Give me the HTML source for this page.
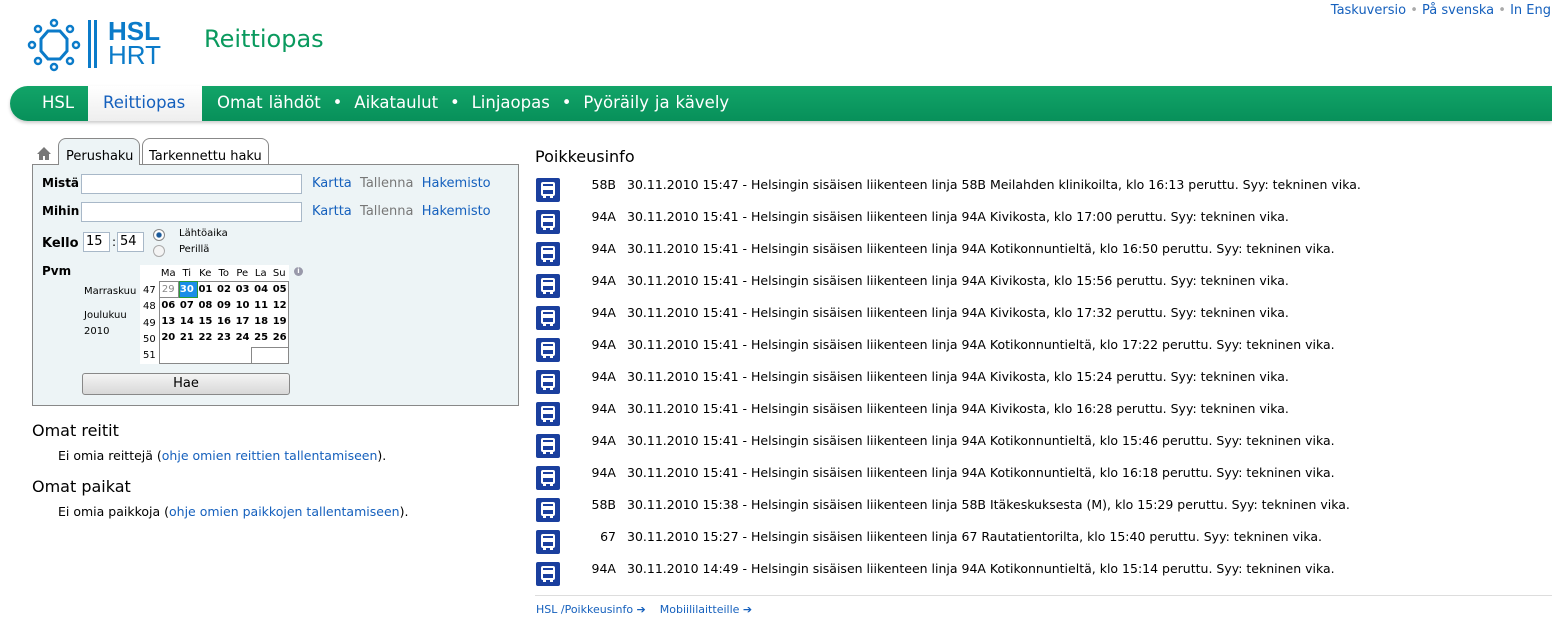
<!DOCTYPE html>
<html><head><meta charset="utf-8"><style>
*{margin:0;padding:0;box-sizing:border-box}
body{width:1552px;height:619px;background:#fff;font-family:"DejaVu Sans","Liberation Sans",sans-serif;position:relative;overflow:hidden;color:#000}
.a{position:absolute;white-space:nowrap}
a,.l{color:#1560bd;text-decoration:none}
.nav{position:absolute;left:10px;top:86px;width:1542px;height:35px;background:linear-gradient(#12a468,#07905a);border-radius:18px 0 0 18px;box-shadow:0 2px 3px #ccc}
.nav span{position:absolute;top:7px;color:#fff;font-size:16.5px;font-family:"DejaVu Sans",sans-serif}
.box{position:absolute;left:32px;top:164px;width:487px;height:242px;background:#edf4f6;border:1px solid #888}
.inp{position:absolute;background:#fff;border:1px solid #a8b8c8}
.f{font-size:12px}
.ic{position:absolute;width:24px;height:24px;background:#1a3f9e;border-radius:2px}
.ic i{position:absolute;left:5px;top:4px;width:14px;height:14px;border:2px solid #fff;border-radius:2px}
.ic b{position:absolute;left:7px;top:8px;width:10px;height:4px;background:#fff}
.ic u{position:absolute;top:17px;width:3px;height:3px;background:#fff}
.cal{table-layout:fixed;width:130px}
.cal td{width:18.5px;height:16px;text-align:center;font-size:10px;font-weight:bold;padding:0;overflow:hidden}
.hd span{display:inline-block;width:18.5px;text-align:center}
</style></head><body>
<div class="a f" style="right:1px;top:3px;font-size:13px"><a>Taskuversio</a> <span style="color:#aaa">•</span> <a>På svenska</a> <span style="color:#aaa">•</span> <a>In Eng</a></div>
<svg class="a" style="left:26px;top:18px" width="56" height="54" viewBox="0 0 56 54"><g fill="none" stroke="#0b7bc9" stroke-width="3"><polygon points="22,13 34,13 41,21 41,33 34,41 22,41 15,33 15,21"/><g stroke-width="2.5"><circle cx="28" cy="5" r="3"/><circle cx="28" cy="49" r="3"/><circle cx="6" cy="27" r="3"/><circle cx="50" cy="27" r="3"/><circle cx="12" cy="11" r="3"/><circle cx="44" cy="11" r="3"/><circle cx="12" cy="43" r="3"/><circle cx="44" cy="43" r="3"/></g></g></svg>
<div class="a" style="left:88px;top:20px;width:3px;height:48px;background:#0b7bc9"></div>
<div class="a" style="left:94px;top:20px;width:3px;height:48px;background:#0b7bc9"></div>
<div class="a" style="left:108px;top:19px;font:bold 26px/24px 'Liberation Sans',sans-serif;color:#0b7bc9">HSL</div>
<div class="a" style="left:108px;top:43px;font:26px/24px 'Liberation Sans',sans-serif;color:#0b7bc9">HRT</div>
<div class="a" style="left:204px;top:25px;font-size:24px;color:#0a9a5e">Reittiopas</div>
<div class="nav">
<div class="a" style="left:78px;top:0;width:114px;height:35px;background:linear-gradient(#fff,#eee)"></div>
<span style="left:32px">HSL</span>
<span style="left:93px;color:#1560bd">Reittiopas</span>
<span style="left:207px;word-spacing:0.7px">Omat lähdöt &nbsp;•&nbsp; Aikataulut &nbsp;•&nbsp; Linjaopas &nbsp;•&nbsp; Pyöräily ja kävely</span>
</div>
<svg class="a" style="left:37px;top:147px" width="14" height="13" viewBox="0 0 14 13"><path d="M7 0L0 7h2v6h4V9h2v4h4V7h2z" fill="#777"/></svg>
<div class="a" style="left:58px;top:138px;width:82px;height:27px;border:1px solid #888;border-bottom:none;border-radius:8px 8px 0 0;background:#edf4f6;z-index:2;font-size:13px;padding:10px 0 0 7px">Perushaku</div>
<div class="a" style="left:142px;top:138px;width:127px;height:26px;border:1px solid #888;border-bottom:none;border-radius:8px 8px 0 0;background:#fff;font-size:13px;padding:10px 0 0 6px">Tarkennettu haku</div>
<div class="box"></div>
<div class="a" style="left:42px;top:176px;font-size:12px;font-weight:bold">Mistä</div>
<div class="inp" style="left:81px;top:174px;width:221px;height:20px"></div>
<div class="a" style="left:312px;top:176px;font-size:13px"><a>Kartta</a> &nbsp;<span style="color:#777">Tallenna</span> &nbsp;<a>Hakemisto</a></div>
<div class="a" style="left:42px;top:204px;font-size:12px;font-weight:bold">Mihin</div>
<div class="inp" style="left:81px;top:202px;width:221px;height:20px"></div>
<div class="a" style="left:312px;top:204px;font-size:13px"><a>Kartta</a> &nbsp;<span style="color:#777">Tallenna</span> &nbsp;<a>Hakemisto</a></div>
<div class="a" style="left:42px;top:236px;font-size:13px;font-weight:bold">Kello</div>
<div class="inp" style="left:83px;top:232px;width:27px;height:20px;font-size:13px;padding:1px 2px">15</div>
<div class="a" style="left:112px;top:235px;font-size:12px">:</div>
<div class="inp" style="left:117px;top:232px;width:27px;height:20px;font-size:13px;padding:1px 2px">54</div>
<div class="a" style="left:153px;top:229px;width:12px;height:12px;border-radius:50%;border:1px solid #888;background:radial-gradient(#1a5a9a 30%,#fff 45%)"></div>
<div class="a" style="left:153px;top:245px;width:12px;height:12px;border-radius:50%;border:1px solid #aaa;background:#f4f4f4"></div>
<div class="a" style="left:179px;top:228px;font-size:10px">Lähtöaika</div>
<div class="a" style="left:179px;top:244px;font-size:10px">Perillä</div>
<div class="a" style="left:42px;top:264px;font-size:12px;font-weight:bold">Pvm</div>
<div class="a" style="left:84px;top:286px;font-size:10px">Marraskuu</div>
<div class="a" style="left:84px;top:310px;font-size:10px">Joulukuu</div>
<div class="a" style="left:84px;top:326px;font-size:10px">2010</div>
<div class="a" style="left:140px;top:265px;width:19px;height:99px;background:#fff"></div>
<div class="a" style="left:159px;top:265px;width:130px;height:17px;background:#fff"></div>
<div class="a" style="left:159px;top:281px;width:130px;height:83px;background:#fff;border:1px solid #888"></div>
<div class="a" style="left:251px;top:347px;width:38px;height:17px;border:1px solid #888;border-right:none;border-bottom:none"></div>
<div class="a" style="left:159px;top:281px;width:20px;height:17px;border-right:1px solid #888;border-bottom:1px solid #888"></div>
<div class="a" style="left:179px;top:281px;width:19px;height:17px;background:#1a8ee8;border:1px solid #2a9a3a"></div>
<div class="a hd" style="left:159px;top:267px;font-size:10px;line-height:14px"><span>Ma</span><span>Ti</span><span>Ke</span><span>To</span><span>Pe</span><span>La</span><span>Su</span></div>
<div class="a" style="left:143px;top:283px;font-size:10px;line-height:16.3px">47<br>48<br>49<br>50<br>51</div>
<table class="a cal" style="left:159px;top:282px;border-collapse:collapse;line-height:16px">
<tr><td style="color:#888;font-weight:normal">29</td><td style="color:#fff">30</td><td>01</td><td>02</td><td>03</td><td>04</td><td>05</td></tr>
<tr><td>06</td><td>07</td><td>08</td><td>09</td><td>10</td><td>11</td><td>12</td></tr>
<tr><td>13</td><td>14</td><td>15</td><td>16</td><td>17</td><td>18</td><td>19</td></tr>
<tr><td>20</td><td>21</td><td>22</td><td>23</td><td>24</td><td>25</td><td>26</td></tr>
</table>
<div class="a" style="left:294px;top:267px;width:9px;height:9px;border-radius:50%;background:#99a;color:#fff;font-size:7px;text-align:center;line-height:9px;font-weight:bold">i</div>
<div class="a" style="left:82px;top:373px;width:208px;height:22px;border:1px solid #888;border-radius:3px;background:linear-gradient(#f4f4f4,#d8d8d8);text-align:center;font-size:13px;line-height:20px">Hae</div>
<div class="a" style="left:32px;top:421px;font-size:16px">Omat reitit</div>
<div class="a" style="left:58px;top:448px;font-size:12.5px">Ei omia reittejä (<a>ohje omien reittien tallentamiseen</a>).</div>
<div class="a" style="left:32px;top:477px;font-size:16px">Omat paikat</div>
<div class="a" style="left:58px;top:504px;font-size:12.5px">Ei omia paikkoja (<a>ohje omien paikkojen tallentamiseen</a>).</div>
<div class="a" style="left:535px;top:147px;font-size:16px">Poikkeusinfo</div>
<div id="rows"></div>
<div class="a" style="left:535px;top:595px;width:1017px;height:1px;background:#ddd"></div>
<div class="a" style="left:536px;top:603px;font-size:11px"><a>HSL /Poikkeusinfo ➔</a> &nbsp; &nbsp;<a>Mobiililaitteille ➔</a></div>
<script>
var d=[["58B","15:47","58B Meilahden klinikoilta, klo 16:13"],["94A","15:41","94A Kivikosta, klo 17:00"],["94A","15:41","94A Kotikonnuntieltä, klo 16:50"],["94A","15:41","94A Kivikosta, klo 15:56"],["94A","15:41","94A Kivikosta, klo 17:32"],["94A","15:41","94A Kotikonnuntieltä, klo 17:22"],["94A","15:41","94A Kivikosta, klo 15:24"],["94A","15:41","94A Kivikosta, klo 16:28"],["94A","15:41","94A Kotikonnuntieltä, klo 15:46"],["94A","15:41","94A Kotikonnuntieltä, klo 16:18"],["58B","15:38","58B Itäkeskuksesta (M), klo 15:29"],["67","15:27","67 Rautatientorilta, klo 15:40"],["94A","14:49","94A Kotikonnuntieltä, klo 15:14"]];
var h="";d.forEach(function(r,i){var y=178+32*i;
h+='<div class="ic" style="left:536px;top:'+y+'px"><i></i><b></b><u style="left:7px"></u><u style="left:14px"></u></div>';
h+='<div class="a" style="left:560px;width:56px;text-align:right;top:'+(y-1)+'px;font-size:12.5px">'+r[0]+'</div>';
h+='<div class="a" style="left:627px;top:'+(y-1)+'px;font-size:12.5px">30.11.2010 '+r[1]+' - Helsingin sisäisen liikenteen linja '+r[2]+' peruttu. Syy: tekninen vika.</div>';});
document.getElementById("rows").innerHTML=h;
</script>
</body></html>
